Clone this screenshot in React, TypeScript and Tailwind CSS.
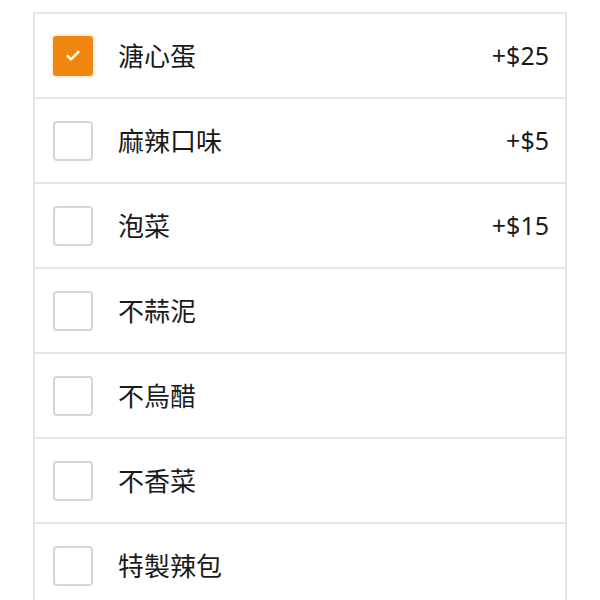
import { Check } from 'lucide-react';

type Option = {
    name: string;
    price?: string;
    checked?: boolean;
};

const OPTIONS: Option[] = [
    { name: '溏心蛋', price: '+$25', checked: true },
    { name: '麻辣口味', price: '+$5' },
    { name: '泡菜', price: '+$15' },
    { name: '不蒜泥' },
    { name: '不烏醋' },
    { name: '不香菜' },
    { name: '特製辣包' },
];

const App: React.FC = () => {
    return (
        <div className="w-[600px] h-[600px] overflow-hidden bg-white pt-3 px-[33px] font-['Noto_Sans','Noto_Sans_CJK_TC',sans-serif]">
            <div className="border-2 border-[#e6e6e6] border-b-0">
                {OPTIONS.map((opt) => (
                    <div
                        key={opt.name}
                        className="h-[85px] flex items-center pl-[18px] pr-[16px] border-b-2 border-[#e6e6e6]"
                    >
                        {opt.checked ? (
                            <div className="w-[40px] h-[40px] rounded-[3px] bg-[#f0860f] flex items-center justify-center shadow-[0_0_4px_rgba(240,134,15,0.35)]">
                                <Check className="w-[16px] h-[16px] text-[#fff4d6]" strokeWidth={4} />
                            </div>
                        ) : (
                            <div className="w-[40px] h-[40px] rounded-[4px] border-2 border-[#d6d6d6] bg-white" />
                        )}
                        <span className="ml-[25px] text-[26px] text-[#1a1a1a] leading-none">{opt.name}</span>
                        {opt.price && (
                            <span className="ml-auto text-[25px] text-[#1a1a1a] leading-none">{opt.price}</span>
                        )}
                    </div>
                ))}
            </div>
        </div>
    );
};

export default App;
